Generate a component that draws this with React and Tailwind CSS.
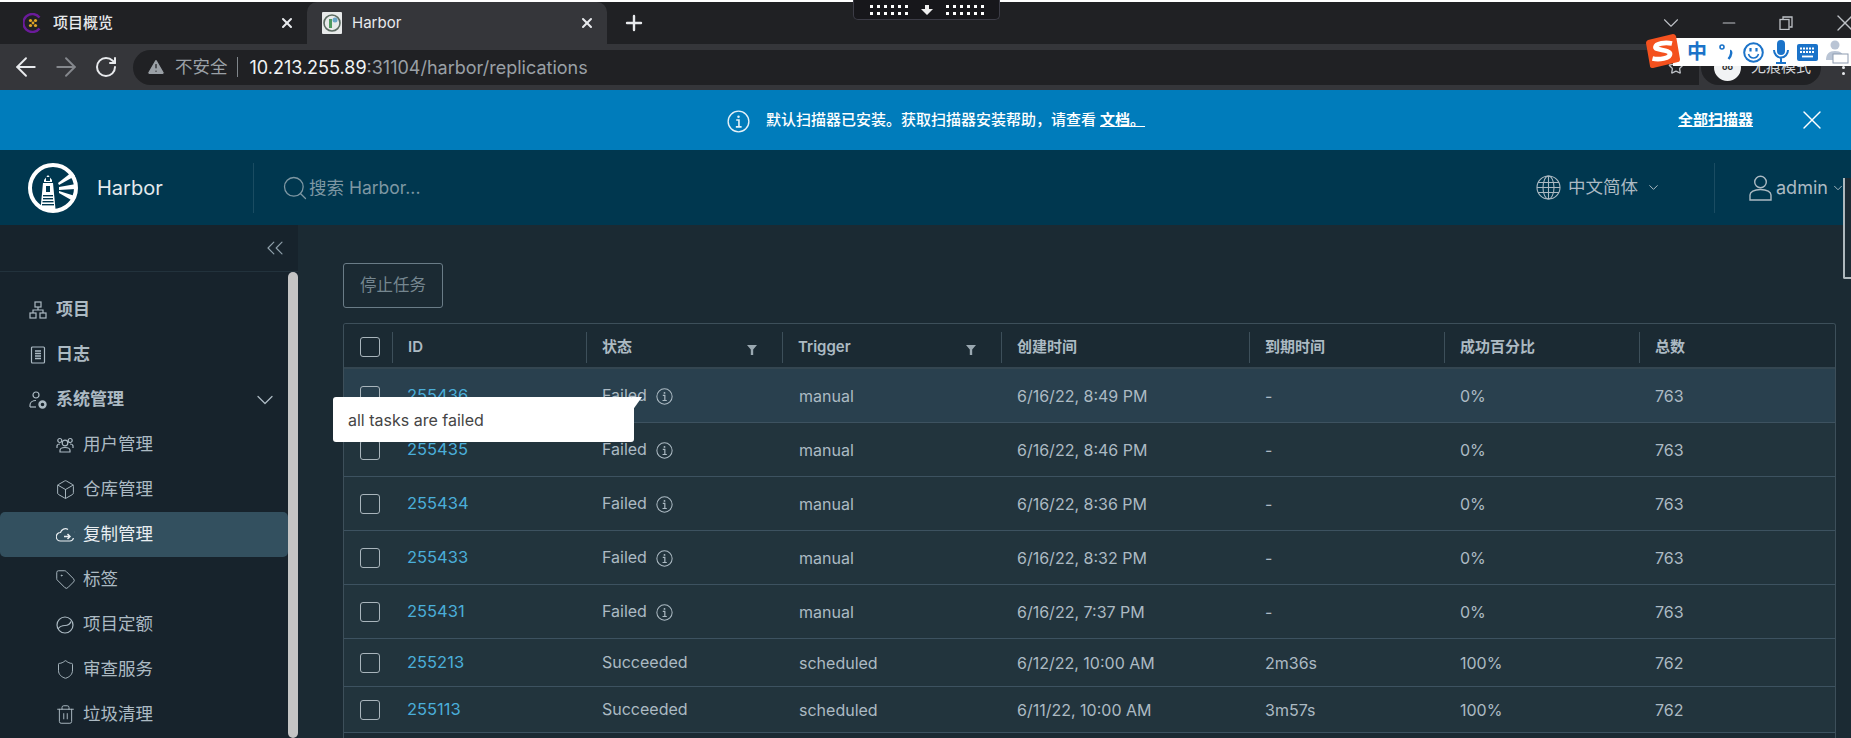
import React from "react";
import { ArrowLeft, ArrowRight, RotateCw, X, Plus, ChevronDown, ChevronsLeft, Search, Box, Tag, Shield, Trash2, Star, TriangleAlert, Minus } from "lucide-react";

function Favicon1() {
  return (
    <svg width="20" height="20" viewBox="0 0 20 20">
      <path d="M16.5 4.5A9 9 0 1 0 16.5 15.5" fill="none" stroke="#6a1b9a" strokeWidth="2.4" />
      <g fill="#e0a526">
        <circle cx="7.5" cy="7.5" r="1.6" /><circle cx="12.5" cy="7.5" r="1.6" /><circle cx="10" cy="10" r="1.4" /><circle cx="7.5" cy="12.5" r="1.6" /><circle cx="12.5" cy="12.5" r="1.6" />
      </g>
    </svg>
  );
}

function Favicon2() {
  return (
    <svg width="20" height="22" viewBox="0 0 20 22">
      <rect width="20" height="22" rx="1" fill="#e8eaea" />
      <circle cx="10" cy="11" r="8" fill="none" stroke="#5a6a60" strokeWidth="1.6" />
      <rect x="7" y="7" width="3" height="9" fill="#4f9a60" />
      <circle cx="13" cy="8" r="2.5" fill="#6aa6c8" />
    </svg>
  );
}

function HarborLogo() {
  return (
    <svg width="50" height="50" viewBox="0 0 50 50">
      <circle cx="25" cy="25" r="23" fill="none" stroke="#fff" strokeWidth="4" />
      <g fill="#fff">
        <path d="M16 17l4-5 4 5v2h-8z" />
        <path d="M15 20h10l2.500 26h-15z" />
        <path d="M30 20L44 9l3 4L31 22z" />
        <path d="M31 24l17-3v5l-17 1z" />
        <path d="M31 28l16 5-2 5-14-8z" />
      </g>
      <g fill="#00374f">
        <rect x="18" y="14" width="4" height="4" />
        <rect x="18" y="23" width="4" height="6" />
        <rect x="15" y="32" width="10" height="1.400" />
        <rect x="15" y="35" width="10" height="1.400" />
        <rect x="14.500" y="38" width="11" height="1.400" />
        <rect x="14" y="41" width="12" height="1.400" />
      </g>
    </svg>
  );
}

function InfoIcon({ size, className }) {
  return (
    <svg className={className} width={size} height={size} viewBox="0 0 20 20" fill="none" stroke="currentColor" strokeWidth="1.200">
      <circle cx="10" cy="10" r="9" />
      <path d="M8 8.700h2.400v6M7.700 14.700h5" strokeWidth="1.400" />
      <circle cx="10" cy="5.800" r="1.100" fill="currentColor" stroke="none" />
    </svg>
  );
}

function FilterIcon() {
  return (
    <svg className="ml-auto mt-[5px]" width="10" height="10" viewBox="0 0 10 10">
      <path d="M0 0h10L6.200 4.500V10H3.800V4.500z" fill="#9aa8b1" />
    </svg>
  );
}

function GlobeIcon() {
  return (
    <svg width="25" height="25" viewBox="0 0 25 25" fill="none" stroke="currentColor" strokeWidth="1.100">
      <circle cx="12.500" cy="12.500" r="11.500" />
      <ellipse cx="12.500" cy="12.500" rx="5.500" ry="11.500" />
      <path d="M12.500 1v23M2 7.500h21M1 12.500h23M2 17.500h21" />
    </svg>
  );
}

function UserIcon() {
  return (
    <svg width="23" height="26" viewBox="0 0 23 26" fill="none" stroke="currentColor" strokeWidth="1.400">
      <circle cx="11.500" cy="7" r="5.800" />
      <path d="M1 25v-5c0-3 4-5.500 10.500-5.500S22 17 22 20v5z" />
    </svg>
  );
}

const iconStroke = { fill: "none", stroke: "currentColor", strokeWidth: 1.2 };

function OrgIcon() {
  return (
    <svg width="18" height="18" viewBox="0 0 18 18" {...iconStroke}>
      <rect x="6" y="1" width="6" height="5" />
      <rect x="1" y="12" width="6" height="5" />
      <rect x="11" y="12" width="6" height="5" />
      <path d="M4 12V9h10v3M9 6v3" />
    </svg>
  );
}
function LogIcon() {
  return (
    <svg width="18" height="18" viewBox="0 0 18 18" {...iconStroke}>
      <rect x="2.500" y="1" width="13" height="16" rx="1" />
      <path d="M6 5h6M6 7.500h6M6 10h6M6 12.500h6" strokeWidth="1.500" />
    </svg>
  );
}
function AdminIcon() {
  return (
    <svg width="18" height="18" viewBox="0 0 18 18" {...iconStroke}>
      <circle cx="7" cy="4" r="3" />
      <path d="M1 16v-2c0-3 3-4.500 6-4.500" />
      <path d="M1 16h6" />
      <circle cx="13.500" cy="13.500" r="3" strokeWidth="2.400" />
    </svg>
  );
}
function UsersIcon() {
  return (
    <svg width="18" height="18" viewBox="0 0 18 18" {...iconStroke}>
      <circle cx="9" cy="7" r="2.800" />
      <path d="M4 16v-1.500c0-2 2-3 5-3s5 1 5 3V16z" />
      <circle cx="3.800" cy="4.500" r="2" />
      <circle cx="14.200" cy="4.500" r="2" />
      <path d="M1 12v-2c0-1 1-2 3-2M17 12v-2c0-1-1-2-3-2" />
    </svg>
  );
}
function CloudIcon() {
  return (
    <svg width="20" height="18" viewBox="0 0 20 18" {...iconStroke}>
      <path d="M12 3.500A5 5 0 0 0 4.500 6.500 4 4 0 0 0 4.500 15H14a3.500 3.500 0 0 0 3.400-3" />
      <path d="M15.500 2v.1M18 6h.1M8 10.500h6M11.500 8l2.500 2.500-2.500 2.500" strokeWidth="1.500" />
    </svg>
  );
}
function QuotaIcon() {
  return (
    <svg width="18" height="18" viewBox="0 0 18 18" {...iconStroke}>
      <circle cx="9" cy="9" r="8" />
      <path d="M2 13c2-3 4-3.500 7-3.500 3 0 5-1.500 6-4" />
    </svg>
  );
}

function Sogou() {
  const blue = "#1b73c9";
  return (
    <div className="absolute left-[1645px] top-[34px] h-[34px] w-[206px]">
      <div className="absolute left-[28px] right-0 top-[4px] flex h-[28px] items-center bg-white" style={{ color: blue }}>
        <span className="ml-[14px] text-[20px] leading-none font-bold">中</span>
        <span className="ml-[12px] flex w-[14px] items-start text-[18px] leading-none font-bold">
          <svg width="14" height="18" viewBox="0 0 14 18" fill="none" stroke={blue}>
            <circle cx="3" cy="4" r="2" strokeWidth="1.600" />
            <path d="M11 8c1.800 0 1.800 4-1.500 8" strokeWidth="2.400" />
          </svg>
        </span>
        <svg className="ml-[10px]" width="21" height="21" viewBox="0 0 21 21" fill="none" stroke={blue} strokeWidth="2">
          <circle cx="10.500" cy="10.500" r="9.300" />
          <path d="M5.500 12c1 3 3 4 5 4s4-1 5-4" strokeWidth="1.600" />
          <path d="M7.500 6v3.500M13.500 6v3.500" strokeWidth="2.200" />
        </svg>
        <svg className="ml-[9px]" width="16" height="24" viewBox="0 0 16 24" fill="none">
          <rect x="4" y="0" width="8" height="15" rx="4" fill={blue} />
          <path d="M1 10c0 4 3 7.500 7 7.500s7-3.500 7-7.500M8 17.500V23M3 23h10" stroke={blue} strokeWidth="2" />
        </svg>
        <svg className="ml-[8px]" width="21" height="17" viewBox="0 0 21 17">
          <rect width="21" height="17" rx="2" fill={blue} />
          <path d="M3 4.500h15M3 8h15" stroke="#fff" strokeWidth="1.800" strokeDasharray="2 1" />
          <path d="M5 12.500h11" stroke="#fff" strokeWidth="1.800" />
        </svg>
        <svg className="ml-[8px]" width="23" height="24" viewBox="0 0 23 24">
          <circle cx="9" cy="5" r="4.500" fill="#b9c4d4" />
          <path d="M0 20c0-6 3-9 9-9s9 3 9 9z" fill="#b9c4d4" />
          <rect x="7" y="14" width="15" height="9" fill="#fff" stroke="#8e9bb0" />
        </svg>
      </div>
      <svg className="absolute left-0 top-0" width="35" height="34" viewBox="0 0 35 34">
        <path d="M3 6L28 0q2 0 3 2l4 23q0 3-2 3L8 34q-3 0-3-2L1 9q0-2 2-3z" fill="#f4511e" />
        <path d="M27 9.500C20 8 11 9.500 10.500 13S25 15.500 25 20 14 26 7.500 24.500" fill="none" stroke="#fff" strokeWidth="4.800" />
      </svg>
    </div>
  );
}

function Notch() {
  const dots = [0, 1, 2, 3, 4, 5];
  const Grid = () => (
    <div className="grid grid-cols-6 gap-x-[4px] gap-y-[4px]">
      {[...dots, ...dots].map((d, i) => (
        <span key={i} className="h-[3px] w-[3px] bg-white" />
      ))}
    </div>
  );
  return (
    <div className="absolute left-[853px] top-0 flex h-[20px] w-[147px] items-center justify-center gap-[13px] rounded-b-[5px] border border-t-0 border-[#3c3c46] bg-[#17171b]">
      <Grid />
      <svg width="12" height="10" viewBox="0 0 12 10"><path d="M4 0h4v4h4L6 10 0 4h4z" fill="#eee" /></svg>
      <Grid />
    </div>
  );
}

function ChromeBar() {
  return (
    <div className="shrink-0">
      <div className="h-[2px] bg-white" />
      <div className="flex h-[42px] items-stretch bg-[#202124] pl-[23px] text-[#e8eaed]">
        <div className="flex w-[284px] items-center pr-[12px] text-[15px] font-medium">
          <Favicon1 />
          <span className="ml-[10px] flex-1">项目概览</span>
          <X size={16} strokeWidth={3} />
        </div>
        <div className="flex w-[300px] items-center rounded-t-[10px] bg-[#35363a] pl-[15px] pr-[12px] text-[15px]">
          <Favicon2 />
          <span className="ml-[10px] flex-1">Harbor</span>
          <X size={16} strokeWidth={3} />
        </div>
        <div className="ml-[15px] flex items-center"><Plus size={24} strokeWidth={2.4} /></div>
        <div className="ml-auto flex items-center text-[#bdc1c6]">
          <ChevronDown size={26} strokeWidth={1} />
          <Minus className="ml-[35px]" size={20} strokeWidth={1.300} />
          <svg className="ml-[40px]" width="14" height="14" viewBox="0 0 14 14" fill="none" stroke="currentColor" strokeWidth="1.300"><rect x="1" y="3.500" width="9" height="10" /><path d="M4 3V1h9v10h-2.500" /></svg>
          <X className="-mr-[8px] ml-[38px]" size={28} strokeWidth={1.100} />
        </div>
      </div>
      <div className="flex h-[46px] items-center bg-[#35363a] pl-[11px]">
        <ArrowLeft size={30} className="text-[#e8eaed]" strokeWidth={1.500} />
        <ArrowRight size={30} className="ml-[10px] text-[#85888d]" strokeWidth={1.500} />
        <RotateCw size={24} className="ml-[13px] text-[#e8eaed]" strokeWidth={2} />
        <div className="ml-[15px] flex h-[35px] w-[1566px] items-center rounded-l-full rounded-r-[18px] bg-[#202124] pl-[13px] text-[18px]">
          <TriangleAlert size={20} className="fill-[#9aa0a6] text-[#202124]" strokeWidth={1.500} />
          <span className="ml-[9px] text-[17.500px] text-[#9aa0a6]">不安全</span>
          <span className="ml-[9px] mr-[12px] h-[20px] w-px bg-[#80868b]" />
          <span className="text-[#f1f3f4]">10.213.255.89</span>
          <span className="text-[#9aa0a6]">:31104/harbor/replications</span>
          <Star size={16} className="ml-auto mr-[15px] text-[#bdc1c6]" strokeWidth={2} />
        </div>
        <div className="ml-[2px] flex h-[35px] w-[120px] items-center rounded-full bg-[#202124] pl-[13px] text-[15px] text-[#d5d7da]">
          <span className="flex h-[27px] w-[27px] items-center justify-center rounded-full bg-[#f1f3f4] text-[9px] font-bold text-[#333]">oo</span>
          <span className="ml-[10px]">无痕模式</span>
        </div>
        <div className="ml-[21px] flex flex-col gap-[3px]">
          <span className="h-[3px] w-[3px] rounded-full bg-[#e8eaed]" />
          <span className="h-[3px] w-[3px] rounded-full bg-[#e8eaed]" />
          <span className="h-[3px] w-[3px] rounded-full bg-[#e8eaed]" />
        </div>
      </div>
    </div>
  );
}

function Banner() {
  return (
    <div className="flex h-[60px] shrink-0 items-center bg-[#007cbb] text-white">
      <InfoIcon size={23} className="ml-[727px] mt-[3px] text-[#e4f1f8]" />
      <span className="ml-[16px] text-[15px] font-medium">
        默认扫描器已安装。获取扫描器安装帮助，请查看 <span className="font-semibold underline">文档。</span>
      </span>
      <span className="ml-[533px] text-[15px] font-bold underline">全部扫描器</span>
      <X size={32} strokeWidth={1} className="ml-[43px]" />
    </div>
  );
}

function Header() {
  return (
    <div className="flex h-[75px] shrink-0 items-center bg-[#00374f] text-[#acbac3]">
      <div className="flex h-[50px] w-[254px] items-center border-r border-[#1a4c62] pl-[28px]">
        <HarborLogo />
        <span className="ml-[19px] mt-[1px] text-[20px] text-[#e3eaed]">Harbor</span>
      </div>
      <div className="ml-[27px] mt-[1px] flex items-center text-[#7e97a3]">
        <Search size={28} strokeWidth={1.100} />
        <span className="text-[17.500px]">搜索 Harbor...</span>
      </div>
      <div className="ml-auto flex items-center">
        <GlobeIcon />
        <span className="ml-[7px] text-[17.500px]">中文简体</span>
        <ChevronDown size={15} strokeWidth={1.600} className="ml-[8px]" />
      </div>
      <div className="ml-[53px] flex h-[50px] w-[137px] items-center border-l border-[#1a4c62] pl-[34px]">
        <UserIcon />
        <span className="ml-[4px] text-[18px]">admin</span>
        <ChevronDown size={14} strokeWidth={1.600} className="ml-[3px]" />
      </div>
    </div>
  );
}

const navItems = [
  { icon: <OrgIcon />, label: "项目", top: true },
  { icon: <LogIcon />, label: "日志", top: true },
  { icon: <AdminIcon />, label: "系统管理", top: true, chevron: true },
  { icon: <UsersIcon />, label: "用户管理" },
  { icon: <Box size={21} strokeWidth={1.100} className="-ml-[1px]" />, label: "仓库管理" },
  { icon: <CloudIcon />, label: "复制管理", active: true },
  { icon: <Tag size={21} strokeWidth={1.100} className="-ml-[1px]" />, label: "标签" },
  { icon: <QuotaIcon />, label: "项目定额" },
  { icon: <Shield size={21} strokeWidth={1.100} className="-ml-[1px]" />, label: "审查服务" },
  { icon: <Trash2 size={21} strokeWidth={1.100} className="-ml-[1px]" />, label: "垃圾清理" },
];

function Sidebar() {
  return (
    <aside className="flex w-[298px] shrink-0 flex-col bg-[#17232c] text-[#acbac3]">
      <div className="flex h-[47px] shrink-0 items-center justify-end border-b border-[#22323c] pr-[9px] text-[#8fa0aa]">
        <ChevronsLeft size={28} strokeWidth={1} />
      </div>
      <div className="flex min-h-0 flex-1">
        <nav className="w-[288px] pt-[15px]">
          {navItems.map((it) =>
            it.top ? (
              <div key={it.label} className="flex h-[45px] items-center pl-[29px] pr-[9px] text-[17px] font-semibold">
                <span className="flex w-[27px]">{it.icon}</span>
                <span className="mt-[1px]">{it.label}</span>
                {it.chevron && <ChevronDown size={28} strokeWidth={1.100} className="ml-auto" />}
              </div>
            ) : (
              <div key={it.label} className={`flex h-[45px] items-center rounded-[5px] pl-[56px] text-[17.500px] ${it.active ? "bg-[#33505f] text-[#e9eef1]" : ""}`}>
                <span className="flex w-[27px]">{it.icon}</span>
                <span>{it.label}</span>
              </div>
            )
          )}
        </nav>
        <div className="w-[10px] rounded-full bg-[#c4c4c4]" />
      </div>
    </aside>
  );
}

const rows = [
  ["255436", "Failed", "manual", "6/16/22, 8:49 PM", "-", "0%", "763"],
  ["255435", "Failed", "manual", "6/16/22, 8:46 PM", "-", "0%", "763"],
  ["255434", "Failed", "manual", "6/16/22, 8:36 PM", "-", "0%", "763"],
  ["255433", "Failed", "manual", "6/16/22, 8:32 PM", "-", "0%", "763"],
  ["255431", "Failed", "manual", "6/16/22, 7:37 PM", "-", "0%", "763"],
  ["255213", "Succeeded", "scheduled", "6/12/22, 10:00 AM", "2m36s", "100%", "762"],
  ["255113", "Succeeded", "scheduled", "6/11/22, 10:00 AM", "3m57s", "100%", "762"],
];

const gridCols = "grid grid-cols-[48px_194px_196px_219px_248px_195px_195px_1fr]";

function Checkbox() {
  return <span className="ml-[16px] block h-[20px] w-[20px] rounded-[3px] border border-[#a9b5bc]" />;
}

function HeadCell({ children, filter }) {
  return (
    <div className="flex h-[31px] items-center border-l border-[#3d4f5a] pl-[15px] pr-[25px] text-[15px] font-semibold text-[#acbac3]">
      <span>{children}</span>
      {filter && <FilterIcon />}
    </div>
  );
}

function Table() {
  return (
    <div className="h-[500px] w-[1493px] overflow-hidden rounded-t-[3px] border border-b-0 border-[#3d4f5a]">
      <div className={`${gridCols} h-[45px] items-center border-b-2 border-[#344651] bg-[#1b2a33] pt-[3px]`}>
        <Checkbox />
        <HeadCell>ID</HeadCell>
        <HeadCell filter>状态</HeadCell>
        <HeadCell filter>Trigger</HeadCell>
        <HeadCell>创建时间</HeadCell>
        <HeadCell>到期时间</HeadCell>
        <HeadCell>成功百分比</HeadCell>
        <HeadCell>总数</HeadCell>
      </div>
      {rows.map((r, i) => (
        <div
          key={r[0]}
          className={`${gridCols} ${i < 5 ? "h-[54px]" : i === 5 ? "h-[48px]" : "h-[46px]"} items-center border-b border-[#3d5260] text-[16px] text-[#acbac3] ${i === 0 ? "bg-[#29404e]" : "bg-[#22343d]"}`}
        >
          <Checkbox />
          <span className="pl-[15px] text-[16.500px] text-[#4aaed9]">{r[0]}</span>
          <span className="flex items-center pl-[16px]">
            <span className="-mt-[2px]">{r[1]}</span>
            {r[1] === "Failed" && <InfoIcon size={17} className="ml-[9px] mt-[1px]" />}
          </span>
          <span className="pl-[17px]">{r[2]}</span>
          <span className="pl-[16px]">{r[3]}</span>
          <span className="pl-[16px]">{r[4]}</span>
          <span className="pl-[16px]">{r[5]}</span>
          <span className="pl-[16px]">{r[6]}</span>
        </div>
      ))}
    </div>
  );
}

function Main() {
  return (
    <main className="min-w-0 flex-1 bg-[#1b2a33] pl-[45px] pt-[38px]">
      <div className="mb-[15px] flex h-[45px] w-[100px] items-center justify-center rounded-[3px] border border-[#6a7c87] text-[16.500px] text-[#75868f]">
        停止任务
      </div>
      <Table />
    </main>
  );
}

function Tooltip() {
  return (
    <div className="absolute left-[333px] top-[397px] flex h-[45px] w-[301px] items-center rounded-[3px] bg-white pl-[15px] text-[16px] text-[#454545]">
      all tasks are failed
      <svg className="absolute left-[299px] top-0" width="11" height="14" viewBox="0 0 11 14"><path d="M0 0h10L0 14z" fill="#fff" /></svg>
    </div>
  );
}

export default function App() {
  return (
    <div className="relative flex h-[738px] w-[1851px] flex-col overflow-hidden bg-[#1b2a33] font-['Inter','Noto_Sans_CJK_SC',sans-serif]">
      <ChromeBar />
      <Banner />
      <Header />
      <div className="flex min-h-0 flex-1">
        <Sidebar />
        <Main />
      </div>
      <Tooltip />
      <Notch />
      <Sogou />
      <div className="absolute left-[1843px] top-[178px] h-[101px] w-[8px] rounded-bl-[2px] border-b-2 border-l-2 border-[#aeb8bd] bg-[#1d2c35]" />
    </div>
  );
}
